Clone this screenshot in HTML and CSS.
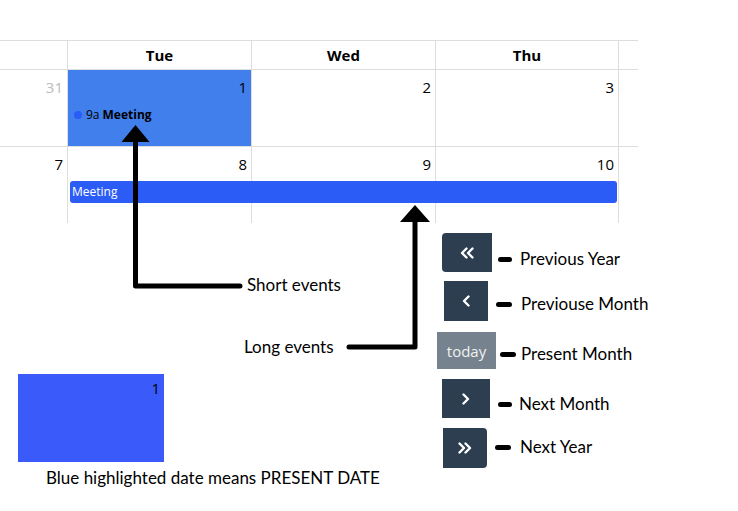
FILE: index.html
```html
<!DOCTYPE html>
<html lang="en">
<head>
<meta charset="utf-8">
<title>Calendar guide</title>
<link rel="stylesheet" href="styles.css">
</head>
<body>
<div class="page">
  <div class="calendar">
    <div class="cal-head">
      <div class="th"></div>
      <div class="th">Tue</div>
      <div class="th">Wed</div>
      <div class="th">Thu</div>
      <div class="th th--last"></div>
    </div>
    <div class="week week--first">
      <div class="day day--other c1"><span class="num">31</span></div>
      <div class="day day--today c2"><span class="num">1</span></div>
      <div class="day c3"><span class="num">2</span></div>
      <div class="day c4"><span class="num">3</span></div>
      <div class="day day--last c5"></div>
      <div class="dot-event"><span class="dot"></span><span class="time">9a</span> <b>Meeting</b></div>
    </div>
    <div class="week week--second">
      <div class="day c1"><span class="num">7</span></div>
      <div class="day c2"><span class="num">8</span></div>
      <div class="day c3"><span class="num">9</span></div>
      <div class="day c4"><span class="num">10</span></div>
      <div class="day day--last c5"></div>
      <div class="bar-event">Meeting</div>
    </div>
  </div>

  <div class="guide">
    <div class="callouts">
      <div class="callout callout--short">Short events</div>
      <div class="callout callout--long">Long events</div>
      <div class="today-sample"><span class="num">1</span></div>
      <div class="caption">Blue highlighted date means PRESENT DATE</div>
    </div>
    <ul class="legend">
      <li class="item item--prev-year">
        <span class="btn btn--prev-year">
          <svg width="14" height="12" viewBox="0 0 14 12"><polyline points="6.5,1.5 2,6 6.5,10.5" /><polyline points="12.5,1.5 8,6 12.5,10.5" /></svg>
        </span>
        <span class="note"><span class="dash"></span>Previous Year</span>
      </li>
      <li class="item item--prev">
        <span class="btn btn--prev">
          <svg width="8" height="12" viewBox="0 0 8 12"><polyline points="6.5,1.5 2,6 6.5,10.5" /></svg>
        </span>
        <span class="note"><span class="dash"></span>Previouse Month</span>
      </li>
      <li class="item item--today">
        <span class="btn btn--today">today</span>
        <span class="note"><span class="dash"></span>Present Month</span>
      </li>
      <li class="item item--next">
        <span class="btn btn--next">
          <svg width="8" height="12" viewBox="0 0 8 12"><polyline points="1.5,1.5 6,6 1.5,10.5" /></svg>
        </span>
        <span class="note"><span class="dash"></span>Next Month</span>
      </li>
      <li class="item item--next-year">
        <span class="btn btn--next-year">
          <svg width="14" height="12" viewBox="0 0 14 12"><polyline points="1.5,1.5 6,6 1.5,10.5" /><polyline points="7.5,1.5 12,6 7.5,10.5" /></svg>
        </span>
        <span class="note"><span class="dash"></span>Next Year</span>
      </li>
    </ul>
  </div>

  <svg class="arrows" width="738" height="511" viewBox="0 0 738 511">
    <polygon points="135.5,125 121.5,142 149.5,142" />
    <polyline points="135.5,140 135.5,286 240,286" />
    <polygon points="415,205 400,222 430,222" />
    <polyline points="415,220 415,347 349,347" />
  </svg>
</div>
</body>
</html>
```

FILE: styles.css
```css
* { box-sizing: border-box; }

html, body {
  margin: 0;
  padding: 0;
  background: #fff;
}

body {
  font-family: "Open Sans", "Noto Sans", sans-serif;
  color: #000;
}

.page {
  position: relative;
  width: 738px;
  height: 511px;
  overflow: hidden;
}

/* ---------- calendar ---------- */
.calendar {
  padding-top: 40px;
  width: 638px;
}

.cal-head,
.week {
  display: grid;
  grid-template-columns: 68px 184px 184px 183px 19px;
}

.th {
  height: 29px;
  border-top: 1px solid #ddd;
  border-right: 1px solid #ddd;
  font-weight: 700;
  font-size: 15px;
  line-height: 28px;
  text-align: center;
}

.th--last { border-right: 0; }

.week--first {
  height: 77px;
  grid-template-rows: 36px 20px 1fr;
}

.week--second {
  height: 77px;
  grid-template-rows: 35px 22px 1fr;
}

.day {
  grid-row: 1 / -1;
  border-top: 1px solid #ddd;
  border-right: 1px solid #ddd;
  text-align: right;
  padding: 6px 4px 0 0;
}

.day--last { border-right: 0; }

.c1 { grid-column: 1; }
.c2 { grid-column: 2; }
.c3 { grid-column: 3; }
.c4 { grid-column: 4; }
.c5 { grid-column: 5; }

.num {
  font-size: 15px;
  line-height: 20px;
}

.day--other .num { color: #bbb; }

.day--today {
  background: #407fec;
  border-top-color: #ddd;
}

.dot-event {
  grid-column: 2;
  grid-row: 2;
  display: flex;
  align-items: center;
  padding-left: 6px;
  font-size: 12px;
  line-height: 20px;
  white-space: nowrap;
}

.dot {
  width: 8px;
  height: 8px;
  border-radius: 50%;
  background: #2c5cf6;
  margin-right: 4px;
}

.dot-event b {
  font-weight: 700;
  margin-left: 3px;
}

.bar-event {
  grid-column: 2 / 5;
  grid-row: 2;
  margin: 0 2px;
  background: #2c5cf6;
  border-radius: 3px;
  color: #fff;
  font-size: 12px;
  line-height: 22px;
  padding-left: 2px;
}

/* ---------- guide ---------- */
.guide {
  display: grid;
  grid-template-columns: 437px 1fr;
}

.callouts {
  display: flex;
  flex-direction: column;
  align-items: flex-start;
}

.callout,
.caption,
.note {
  font-family: "Lato", "Open Sans", sans-serif;
  font-size: 17px;
  line-height: 20px;
  white-space: nowrap;
}

.callout--short {
  margin: 52px 0 0 247px;
}

.callout--long {
  margin: 42px 0 0 244px;
}

.today-sample {
  margin: 17px 0 0 18px;
  width: 146px;
  height: 88px;
  background: #3a5bf9;
  text-align: right;
  padding: 3px 4px 0 0;
}

.caption {
  margin: 6px 0 0 46px;
}

/* ---------- legend ---------- */
.legend {
  list-style: none;
  margin: 0;
  padding: 10px 0 0 0;
  display: flex;
  flex-direction: column;
}

.item {
  display: flex;
  align-items: flex-start;
}

.btn {
  display: flex;
  align-items: center;
  justify-content: center;
  background: #2c3e50;
  color: #fff;
}

.btn svg {
  fill: none;
  stroke: #fff;
  stroke-width: 2.4;
  stroke-linecap: round;
  stroke-linejoin: round;
}

.note {
  display: flex;
  align-items: center;
}

.dash {
  display: block;
  width: 14px;
  height: 5px;
  border-radius: 3px;
  background: #000;
  margin-right: 8px;
}

.btn--prev-year {
  margin-left: 5px;
  width: 50px;
  height: 39px;
  border-radius: 4px 0 0 4px;
}
.item--prev-year .note { margin: 16px 0 0 6px; }

.item--prev { margin-top: 9px; }
.btn--prev {
  margin-left: 7px;
  width: 44px;
  height: 40px;
}
.item--prev .note { margin: 13px 0 0 8px; }
.item--prev .dash { width: 16px; margin-right: 9px; }

.item--today { margin-top: 11px; }
.btn--today {
  width: 59px;
  height: 37px;
  background: #76828d;
  color: #f2f2f2;
  font-size: 15px;
  font-family: "Open Sans", sans-serif;
}
.item--today .note { margin: 12px 0 0 4px; }
.item--today .dash { width: 16px; margin-right: 5px; }

.item--next { margin-top: 10px; }
.btn--next {
  margin-left: 5px;
  width: 48px;
  height: 39px;
}
.item--next .note { margin: 15px 0 0 8px; }
.item--next .dash { margin-right: 7px; }

.item--next-year { margin-top: 10px; }
.btn--next-year {
  margin-left: 6px;
  width: 44px;
  height: 40px;
  border-radius: 0 4px 4px 0;
}
.item--next-year .note { margin: 9px 0 0 8px; }
.item--next-year .dash { width: 16px; margin-right: 9px; }

/* ---------- annotation arrows ---------- */
.arrows {
  position: absolute;
  top: 0;
  left: 0;
  pointer-events: none;
}

.arrows polygon { fill: #000; }

.arrows polyline {
  fill: none;
  stroke: #000;
  stroke-width: 5;
  stroke-linecap: round;
  stroke-linejoin: round;
}
```
